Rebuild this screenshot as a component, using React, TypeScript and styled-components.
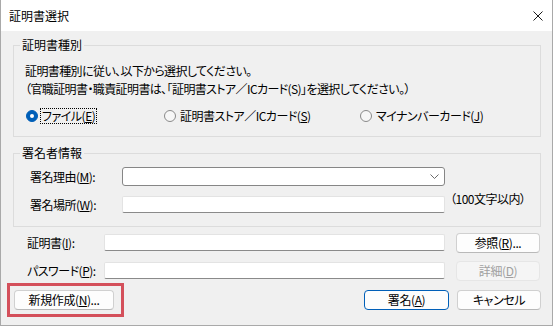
import React from "react";
import styled, { createGlobalStyle } from "styled-components";

const Global = createGlobalStyle`
  html, body { margin: 0; padding: 0; background: #ffffff; }
  body {
    font-family: "Noto Sans CJK JP", "Noto Sans", sans-serif;
    font-size: 12px;
    color: #000;
    font-feature-settings: "palt";
  }
  * { box-sizing: border-box; }
`;

const Window = styled.div`
  width: 553px;
  height: 326px;
  display: flex;
  flex-direction: column;
  border: 1px solid #a9a9a9;
  border-top: none;
  background: #f0f0f0;
  overflow: hidden;
`;

const TitleBar = styled.div`
  height: 31px;
  flex: none;
  background: #ffffff;
  display: flex;
  align-items: center;
  justify-content: space-between;
  padding: 0 9px 0 8px;
`;

const Title = styled.span`
  font-size: 12px;
  line-height: 16px;
`;

const Close = styled.svg`
  width: 10px;
  height: 10px;
  display: block;
`;

const Body = styled.div`
  flex: 1;
  display: flex;
  flex-direction: column;
  padding: 6px 11px 0 12px;
`;

const Group = styled.fieldset<{ $top?: number; $pad: string }>`
  margin: ${(p) => p.$top ?? 0}px 0 0 0;
  border: 1px solid #dcdcdc;
  padding: ${(p) => p.$pad};
  min-width: 0;
`;

const Legend = styled.legend`
  margin-left: 6px;
  padding: 0 2px;
  font-size: 12px;
  line-height: 16px;
`;

const Desc = styled.p`
  margin: 0;
  padding-left: 11px;
  line-height: 18px;
  letter-spacing: -0.6px;
`;

const RadioRow = styled.div`
  display: grid;
  grid-template-columns: 138px 196px auto;
  margin-top: 8px;
  padding-left: 12px;
  height: 20px;
  align-items: center;
`;

const RadioItem = styled.label`
  display: flex;
  align-items: center;
  gap: 2px;
  letter-spacing: -0.5px;
`;

const Circle = styled.span<{ $on?: boolean }>`
  width: 12px;
  height: 12px;
  border-radius: 50%;
  flex: none;
  display: flex;
  align-items: center;
  justify-content: center;
  background: ${(p) => (p.$on ? "#005fb8" : "#f7f7f7")};
  border: 1px solid ${(p) => (p.$on ? "#005fb8" : "#8a8a8a")};
  &::after {
    content: "";
    display: ${(p) => (p.$on ? "block" : "none")};
    width: 4px;
    height: 4px;
    border-radius: 50%;
    background: #fff;
  }
`;

const RadioText = styled.span<{ $focus?: boolean }>`
  padding: 0 1px;
  line-height: 14px;
  border: 1px dotted ${(p) => (p.$focus ? "#000" : "transparent")};
`;

const SignerGrid = styled.div`
  display: grid;
  grid-template-columns: 87px 323px auto;
  grid-template-rows: 19px 19px;
  row-gap: 9px;
  column-gap: 5px;
  padding-left: 16px;
  align-items: center;
`;

const FieldLabel = styled.span`
  letter-spacing: -0.5px;
  line-height: 16px;
  white-space: nowrap;
`;

const Combo = styled.div`
  height: 19px;
  background: #fff;
  border: 1px solid #868686;
  border-radius: 3px;
  display: flex;
  align-items: center;
  justify-content: flex-end;
  padding-right: 5px;
`;

const TextBox = styled.div`
  height: 17px;
  background: #fff;
  border: 1px solid #e3e3e3;
  border-bottom-color: #8a8a8a;
  border-radius: 2px;
`;

const Note = styled.span`
  align-self: start;
  margin-top: -4px;
  letter-spacing: -0.5px;
  line-height: 16px;
  white-space: nowrap;
`;

const CertGrid = styled.div`
  display: grid;
  grid-template-columns: 66px 341px 84px;
  grid-template-rows: 19px 19px;
  row-gap: 9px;
  column-gap: 11px;
  margin-top: 6px;
  padding-left: 14px;
  align-items: center;
`;

const Button = styled.button<{ $primary?: boolean; $w: number }>`
  width: ${(p) => p.$w}px;
  height: 20px;
  padding: 0;
  margin: 0;
  font: inherit;
  font-size: 12px;
  line-height: 16px;
  letter-spacing: -0.4px;
  color: ${(p) => (p.disabled ? "#a0a0a0" : "#000")};
  background: ${(p) => (p.disabled ? "#f5f5f5" : "#fdfdfd")};
  border: 1px solid
    ${(p) => (p.$primary ? "#005fb8" : p.disabled ? "#e6e6e6" : "#d0d0d0")};
  border-bottom-color: ${(p) =>
    p.$primary ? "#005fb8" : p.disabled ? "#e6e6e6" : "#b9b9b9"};
  border-radius: 4px;
  display: flex;
  align-items: center;
  justify-content: center;
`;

const Footer = styled.div`
  display: flex;
  align-items: center;
  gap: 8px;
  margin-top: 10px;
  padding-left: 1px;
`;

const Spacer = styled.div`
  flex: 1;
`;

const Highlighted = styled.div`
  position: relative;
  display: flex;
  &::before {
    content: "";
    position: absolute;
    inset: -7px -10px -7px -7px;
    border: 3px solid #d4505b;
    pointer-events: none;
  }
`;

const Chevron = () => (
  <svg width="9" height="5" viewBox="0 0 9 5">
    <polyline points="0.5,0.5 4.5,4.5 8.5,0.5" fill="none" stroke="#6b6b6b" strokeWidth="1" />
  </svg>
);

export default function App() {
  return (
    <>
      <Global />
      <Window>
        <TitleBar>
          <Title>証明書選択</Title>
          <Close viewBox="0 0 10 10">
            <path d="M0.5 0.5 L9.5 9.5 M9.5 0.5 L0.5 9.5" stroke="#1a1a1a" strokeWidth="1" />
          </Close>
        </TitleBar>
        <Body>
          <Group $pad="9px 0 10px 0">
            <Legend>証明書種別</Legend>
            <Desc>証明書種別に従い、以下から選択してください。</Desc>
            <Desc>（官職証明書・職責証明書は、「証明書ストア／ICカード(S)」を選択してください。）</Desc>
            <RadioRow>
              <RadioItem>
                <Circle $on />
                <RadioText $focus>
                  ファイル(<u>E</u>)
                </RadioText>
              </RadioItem>
              <RadioItem>
                <Circle />
                <RadioText>
                  証明書ストア／ICカード(<u>S</u>)
                </RadioText>
              </RadioItem>
              <RadioItem>
                <Circle />
                <RadioText>
                  マイナンバーカード(<u>J</u>)
                </RadioText>
              </RadioItem>
            </RadioRow>
          </Group>
          <Group $top={8} $pad="6px 0 12px 0">
            <Legend>署名者情報</Legend>
            <SignerGrid>
              <FieldLabel>
                署名理由(<u>M</u>):
              </FieldLabel>
              <Combo>
                <Chevron />
              </Combo>
              <span />
              <FieldLabel>
                署名場所(<u>W</u>):
              </FieldLabel>
              <TextBox />
              <Note>（100文字以内）</Note>
            </SignerGrid>
          </Group>
          <CertGrid>
            <FieldLabel>
              証明書(<u>I</u>):
            </FieldLabel>
            <TextBox />
            <Button $w={84}>
              参照(<u>R</u>)...
            </Button>
            <FieldLabel>
              パスワード(<u>P</u>):
            </FieldLabel>
            <TextBox />
            <Button $w={84} disabled>
              詳細(<u>D</u>)
            </Button>
          </CertGrid>
          <Footer>
            <Highlighted>
              <Button $w={100}>
                新規作成(<u>N</u>)...
              </Button>
            </Highlighted>
            <Spacer />
            <Button $w={85} $primary>
              署名(<u>A</u>)
            </Button>
            <Button $w={84}>キャンセル</Button>
          </Footer>
        </Body>
      </Window>
    </>
  );
}
